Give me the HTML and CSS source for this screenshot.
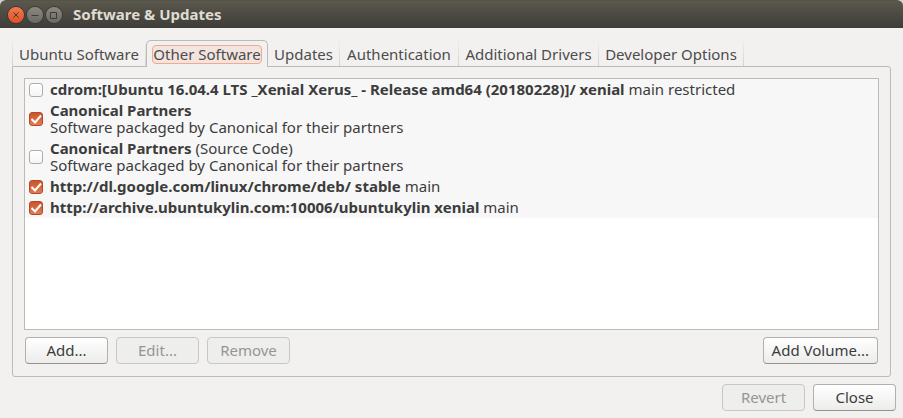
FILE: index.html
```html
<!DOCTYPE html>
<html lang="en">
<head>
<meta charset="utf-8">
<title>Software &amp; Updates</title>
<link rel="stylesheet" href="styles.css">
</head>
<body>
<div class="window">
  <header class="titlebar">
    <div class="controls">
      <button class="control control-close" type="button" aria-label="Close window">
        <svg viewBox="0 0 16 16"><path d="M5.5 5.5l5 5M10.5 5.5l-5 5"/></svg>
      </button>
      <button class="control" type="button" aria-label="Minimize">
        <svg viewBox="0 0 16 16"><path d="M4.5 8.5h7"/></svg>
      </button>
      <button class="control" type="button" aria-label="Maximize">
        <svg viewBox="0 0 16 16"><path d="M4.5 5.5h6v6h-6z"/></svg>
      </button>
    </div>
    <h1 class="title">Software &amp; Updates</h1>
  </header>
  <main class="content">
    <div class="tabs" role="tablist">
      <button class="tab" type="button" role="tab">Ubuntu Software</button>
      <button class="tab tab-selected" type="button" role="tab" aria-selected="true"><span class="tab-focus">Other Software</span></button>
      <button class="tab" type="button" role="tab">Updates</button>
      <button class="tab" type="button" role="tab">Authentication</button>
      <button class="tab" type="button" role="tab">Additional Drivers</button>
      <button class="tab" type="button" role="tab">Developer Options</button>
    </div>
    <section class="panel" role="tabpanel">
      <div class="list">
        <label class="source"><input class="check" type="checkbox"><span><b>cdrom:[Ubuntu 16.04.4 LTS _Xenial Xerus_ - Release amd64 (20180228)]/ xenial</b> main restricted</span></label>
        <label class="source"><input class="check" type="checkbox" checked><span><b>Canonical Partners</b><br>Software packaged by Canonical for their partners</span></label>
        <label class="source"><input class="check" type="checkbox"><span><b>Canonical Partners</b> (Source Code)<br>Software packaged by Canonical for their partners</span></label>
        <label class="source"><input class="check" type="checkbox" checked><span><b>http://dl.google.com/linux/chrome/deb/ stable</b> main</span></label>
        <label class="source"><input class="check" type="checkbox" checked><span><b>http://archive.ubuntukylin.com:10006/ubuntukylin xenial</b> main</span></label>
      </div>
      <div class="actions">
        <button class="button" type="button">Add...</button>
        <button class="button" type="button" disabled>Edit...</button>
        <button class="button" type="button" disabled>Remove</button>
        <button class="button button-end" type="button">Add Volume...</button>
      </div>
    </section>
  </main>
  <footer class="footer">
    <button class="button" type="button" disabled>Revert</button>
    <button class="button" type="button">Close</button>
  </footer>
</div>
</body>
</html>
```
FILE: styles.css
```css
* {
  box-sizing: border-box;
}

body {
  margin: 0;
  background: #d5d3cf;
  color: #3c3c3c;
  font: 15px/17px "Noto Sans", "Open Sans", sans-serif;
}

button {
  font: inherit;
  color: inherit;
}

.window {
  display: flex;
  flex-direction: column;
  min-height: 100vh;
  background: #f2f1f0;
  border-radius: 6px 6px 0 0;
}

.titlebar {
  display: flex;
  align-items: center;
  gap: 11px;
  height: 28px;
  padding: 0 8px;
  border-radius: 6px 6px 0 0;
  border-top: 1px solid #55534a;
  background: linear-gradient(#5b584c, #3d3c38);
}

.controls {
  display: flex;
  gap: 3px;
}

.control {
  width: 16px;
  height: 16px;
  padding: 0;
  border: 0;
  border-radius: 50%;
  background: linear-gradient(#8a8881, #6b6963);
  box-shadow: 0 0 0 1px #3b3a35;
}

.control-close {
  background: linear-gradient(#f4784f, #e2501f);
}

.control svg {
  display: block;
  width: 16px;
  height: 16px;
  fill: none;
  stroke: #3c3b37;
  stroke-width: 1;
}

.title {
  margin: 0;
  font-size: 15px;
  font-weight: 700;
  color: #dfdbd2;
}

.content {
  display: flex;
  flex: 1;
  flex-direction: column;
  padding: 12px 12px 0;
}

.tabs {
  display: grid;
  grid-template-columns: 134px 122px 72px 119px 140px 145px;
  height: 27px;
  margin-bottom: -1px;
  z-index: 1;
}

.tab {
  padding: 3px 0 0;
  border: 0;
  border-right: 1px solid;
  border-image: linear-gradient(#f2f1f0, #d2d0cd) 1;
  background: none;
  color: #4c4c4c;
  white-space: nowrap;
  margin-bottom: 1px;
}

.tab:first-child {
  border-left: 1px solid;
}

.tab-selected {
  padding: 0;
  border: 1px solid #bdbbb8;
  border-bottom: 0;
  border-image: none;
  border-radius: 5px 5px 0 0;
  background: #f2f1f0;
  margin-bottom: 0;
}

.tab-focus {
  display: block;
  margin: 0 5px;
  border: 1px solid #f3a98d;
  border-radius: 4px;
  background: #f2e4df;
}

.panel {
  display: flex;
  flex: 1;
  flex-direction: column;
  gap: 7px;
  padding: 11px 11px 12px;
  border: 1px solid #bdbbb8;
  border-radius: 0 3px 3px 3px;
}

.list {
  flex: 1;
  border: 1px solid #bdbbb8;
  background: #fff;
}

.source {
  display: flex;
  align-items: center;
  gap: 7px;
  padding: 2px 4px;
  background: #f7f7f7;
}

.check {
  flex: none;
  width: 14px;
  height: 14px;
  margin: 0;
  appearance: none;
  border: 1px solid #aeaba8;
  border-radius: 3px;
  background: linear-gradient(#fff, #f5f5f5);
}

.check:checked {
  border-color: #b34a25;
  background: url("data:image/svg+xml,%3Csvg xmlns='http://www.w3.org/2000/svg' viewBox='0 0 12 12'%3E%3Cpath d='M1.5 6l3.5 3.5 6-7' fill='none' stroke='white' stroke-width='2'/%3E%3C/svg%3E"), linear-gradient(#cc5429, #e27b52);
}

.actions,
.footer {
  display: flex;
  gap: 8px;
}

.actions {
  padding: 0 1px;
}

.footer {
  justify-content: flex-end;
  padding: 7px;
}

.button {
  min-width: 83px;
  height: 27px;
  padding: 0 8px;
  border: 1px solid #b2b0ad;
  border-bottom-color: #949290;
  border-radius: 4px;
  background: linear-gradient(#fff, #ececeb);
}

.button:disabled {
  border-color: #c8c7c5;
  background: #eeeeed;
  color: #979593;
}

.button-end {
  min-width: 115px;
  margin-left: auto;
}
```
